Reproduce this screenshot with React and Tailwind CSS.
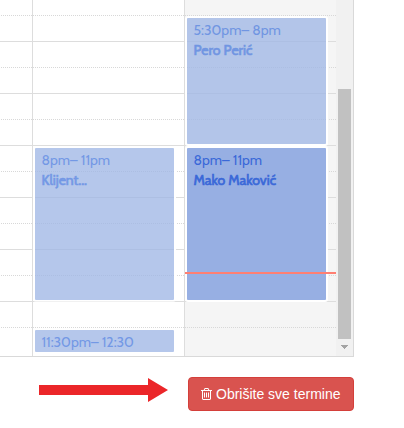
import React from "react";

const rows = Array.from({ length: 13 }, (_, i) => i);

function Slots() {
  return (
    <div className="absolute left-0 -top-[10px]">
      {rows.map((i) => (
        <div
          key={i}
          className={
            i % 2 === 0
              ? "ml-px h-[26px] w-[335px] border-b border-dotted border-[#d8d8d8]"
              : "h-[26px] w-[336px] border-b border-[#ddd]"
          }
        />
      ))}
    </div>
  );
}

function Event({ box, tone, text, time, name }) {
  return (
    <div className={`absolute rounded-[3px] border-2 ${box}`}>
      <div className={`h-full w-full overflow-hidden rounded-[1px] ${tone}`}>
        <div className={`whitespace-nowrap pl-[6.5px] pt-[2px] font-['Cabin','Lato',sans-serif] text-[14px] leading-[20px] ${text}`}>
          <div>{time}</div>
          {name && <div className="[-webkit-text-stroke:0.6px_currentColor]">{name}</div>}
        </div>
      </div>
    </div>
  );
}

export default function App() {
  return (
    <div className="h-[428px] w-[404px] overflow-hidden bg-white">
      <div className="relative flex h-[357px] w-[354px] overflow-hidden border-b border-r border-[#d9d9d9]">
        <div className="w-[33px] border-r border-[#ddd]" />
        <div className="w-[152px] border-r border-[#ddd]" />
        <div className="w-[151px] bg-[#f5f5f5]" />
        <Slots />
        <Event box="left-[33px] top-[146px] h-[156px] w-[143px] border-white border-b-white/60" tone="bg-[#9fb6e5]/77" text="text-[#7398e5]" time="8pm– 11pm" name="Klijent..." />
        <Event box="left-[33px] top-[328px] h-[26px] w-[143px] border-white" tone="bg-[#9fb6e5]/77" text="text-[#7398e5]" time="11:30pm– 12:30" />
        <Event box="left-[185px] top-[16px] h-[130px] w-[143px] border-white" tone="bg-[#9fb6e5]/77" text="text-[#7095e2]" time="5:30pm– 8pm" name="Pero Perić" />
        <Event box="left-[185px] top-[146px] h-[156px] w-[143px] border-white" tone="bg-[#97afe3]" text="text-[#3a68d8]" time="8pm– 11pm" name="Mako Maković" />
        <div className="absolute left-[185px] top-[272px] h-[2px] w-[151px] bg-[#ff7f72]" />
        <div className="relative flex w-[17px] flex-col items-center bg-[#f1f1f1] pt-[89px]">
          <div className="h-[250px] w-[13px] bg-[#c1c1c1]" />
          <svg className="mt-[6px]" width="7" height="4" viewBox="0 0 7 4" fill="#a3a3a3" shapeRendering="crispEdges">
            <path d="M0 0h7v1h-1v1h-1v1h-1v1h-1v-1h-1v-1h-1v-1h-1z" />
          </svg>
        </div>
      </div>
      <div className="flex pl-[39px] pt-[20px]">
        <svg className="mt-px" width="129" height="24" viewBox="0 0 129 24" fill="#eb2629">
          <path d="M0 7h109V0l20 12-20 12v-7H0z" />
        </svg>
        <button className="ml-[20px] flex h-[34px] w-[166px] items-center rounded-[4px] border border-[#d43f3a] bg-[#d9534f] pl-[12px] font-['Liberation_Sans',Arial,sans-serif] text-[14px] text-white">
          <svg className="mr-[4px]" width="11" height="12" viewBox="192 128 1408 1536" fill="white">
            <path d="M704 736v576q0 14-9 23t-23 9h-64q-14 0-23-9t-9-23v-576q0-14 9-23t23-9h64q14 0 23 9t9 23zm256 0v576q0 14-9 23t-23 9h-64q-14 0-23-9t-9-23v-576q0-14 9-23t23-9h64q14 0 23 9t9 23zm256 0v576q0 14-9 23t-23 9h-64q-14 0-23-9t-9-23v-576q0-14 9-23t23-9h64q14 0 23 9t9 23zm128 724v-948h-896v948q0 22 7 40.5t14.5 27 10.5 8.5h832q3 0 10.5-8.5t14.5-27 7-40.5zm-672-1076h448l-48-117q-7-9-17-11h-317q-10 2-17 11zm928 32v64q0 14-9 23t-23 9h-96v948q0 83-47 143.5t-113 60.5h-832q-66 0-113-58.5t-47-141.5v-952h-96q-14 0-23-9t-9-23v-64q0-14 9-23t23-9h309l70-167q15-37 54-63t79-26h320q40 0 79 26t54 63l70 167h309q14 0 23 9t9 23z" />
          </svg>
          <span className="whitespace-nowrap">Obrišite sve termine</span>
        </button>
      </div>
    </div>
  );
}
